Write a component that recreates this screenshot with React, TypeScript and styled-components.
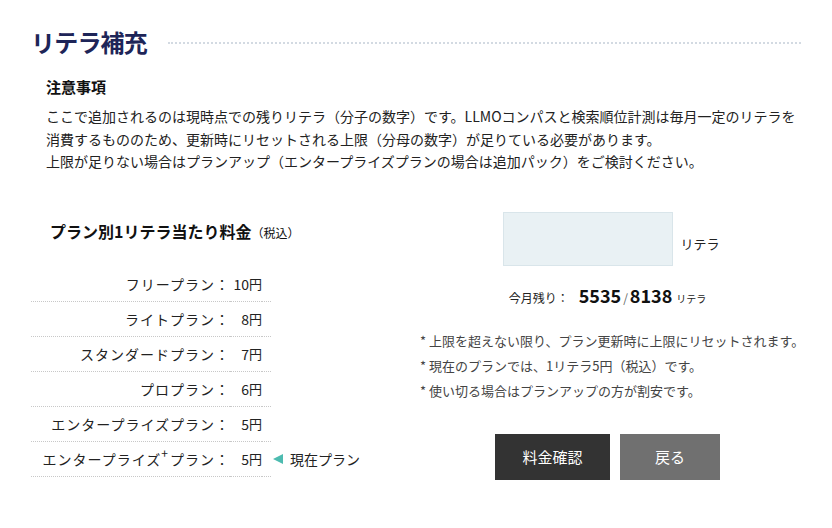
import styled, { createGlobalStyle } from 'styled-components'

const GlobalStyle = createGlobalStyle`
  body {
    margin: 0;
    background: #fff;
    font-family: 'Noto Sans CJK JP', 'Noto Sans', sans-serif;
    color: #222;
  }
`

const Page = styled.div`
  width: 832px;
  height: 528px;
  box-sizing: border-box;
  padding: 24px 31px 0 31px;
`

const Header = styled.div`
  display: flex;
  align-items: center;
  gap: 21px;
`

const Title = styled.h1`
  margin: 0;
  font-size: 24px;
  line-height: 36px;
  font-weight: 700;
  color: #1e2558;
  letter-spacing: -0.8px;
`

const HeaderLine = styled.div`
  flex: 1;
  border-top: 2px dotted #d3dae2;
  margin-top: 2px;
`

const Notice = styled.div`
  padding-left: 15px;
  margin-top: 16px;
`

const NoticeTitle = styled.h2`
  margin: 0 0 7px;
  font-size: 15px;
  line-height: 22px;
  font-weight: 700;
  color: #111;
`

const NoticeText = styled.p`
  margin: 0;
  font-size: 14px;
  line-height: 22.5px;
  white-space: nowrap;
  color: #222;
`

const Lower = styled.div`
  display: grid;
  grid-template-columns: 383px minmax(0, 1fr);
  margin-top: 39px;
`

const PriceColumn = styled.div`
  padding-top: 8px;
`

const PriceHeading = styled.h3`
  margin: 0 0 23px 19px;
  font-size: 16px;
  line-height: 22px;
  font-weight: 700;
  color: #111;
`

const Small = styled.span`
  font-size: 12px;
  font-weight: 400;
`

const PriceRow = styled.div`
  display: grid;
  grid-template-columns: 199px 32px 9px auto;
  height: 35px;
  align-items: stretch;
  font-size: 14px;
`

const Cell = styled.div<{ $spaced?: boolean }>`
  display: flex;
  align-items: center;
  justify-content: flex-end;
  border-bottom: 1px dotted #c8c8c8;
  white-space: nowrap;
  letter-spacing: ${(p) => (p.$spaced ? '1px' : '0')};
`

const Yen = styled.span`
  font-size: 13px;
`

const Plus = styled.span`
  font-size: 12px;
  position: relative;
  top: -6px;
  margin: 0 1px 0 0;
`

const Current = styled.div`
  display: flex;
  align-items: center;
  gap: 7px;
  padding-left: 2px;
  font-size: 14px;
  white-space: nowrap;
`

const Triangle = styled.span`
  width: 0;
  height: 0;
  border-top: 5px solid transparent;
  border-bottom: 5px solid transparent;
  border-right: 10px solid #4dbbb0;
`

const RightColumn = styled.div`
  display: flex;
  flex-direction: column;
  align-items: center;
`

const InputRow = styled.div`
  display: flex;
  align-items: center;
  gap: 7px;
  margin-left: 8px;
`

const CountInput = styled.input`
  width: 170px;
  height: 54px;
  box-sizing: border-box;
  background: #e9f1f4;
  border: 1px solid #d9e5ea;
  outline: none;
`

const Unit = styled.span`
  font-size: 13px;
  margin-top: 10px;
`

const Remaining = styled.div`
  display: flex;
  align-items: baseline;
  margin-top: 15px;
  line-height: 28px;
`

const RemainLabel = styled.span`
  font-size: 12px;
  margin-right: 10px;
`

const Big = styled.span`
  font-size: 18px;
  font-weight: 700;
  color: #111;
`

const Slash = styled.span`
  font-size: 12px;
  color: #666;
  margin: 0 2px;
`

const TinyUnit = styled.span`
  font-size: 10px;
  margin-left: 4px;
`

const Notes = styled.ul`
  align-self: stretch;
  list-style: none;
  margin: 15px 0 0;
  padding-left: 6px;
  font-size: 13px;
  line-height: 25px;
  color: #444;
  white-space: nowrap;
`

const Buttons = styled.div`
  display: flex;
  gap: 10px;
  margin-top: 31px;
`

const Button = styled.button<{ $variant: 'primary' | 'secondary' }>`
  height: 46px;
  width: ${(p) => (p.$variant === 'primary' ? '115px' : '100px')};
  border: none;
  background: ${(p) => (p.$variant === 'primary' ? '#333333' : '#707070')};
  color: #fff;
  font-family: inherit;
  font-size: 15px;
  cursor: pointer;
`

const plans = [
  { name: 'フリープラン', price: '10' },
  { name: 'ライトプラン', price: '8' },
  { name: 'スタンダードプラン', price: '7' },
  { name: 'プロプラン', price: '6' },
  { name: 'エンタープライズプラン', price: '5' },
]

const App = () => {
  return (
    <Page>
      <GlobalStyle />
      <Header>
        <Title>リテラ補充</Title>
        <HeaderLine />
      </Header>
      <Notice>
        <NoticeTitle>注意事項</NoticeTitle>
        <NoticeText>
          ここで追加されるのは現時点での残りリテラ（分子の数字）です。LLMOコンパスと検索順位計測は毎月一定のリテラを
        </NoticeText>
        <NoticeText>
          消費するもののため、更新時にリセットされる上限（分母の数字）が足りている必要があります。
        </NoticeText>
        <NoticeText>
          上限が足りない場合はプランアップ（エンタープライズプランの場合は追加パック）をご検討ください。
        </NoticeText>
      </Notice>
      <Lower>
        <PriceColumn>
          <PriceHeading>
            プラン別1リテラ当たり料金<Small>（税込）</Small>
          </PriceHeading>
          {plans.map((p) => (
            <PriceRow key={p.name}>
              <Cell $spaced>{p.name}：</Cell>
              <Cell>
                {p.price}
                <Yen>円</Yen>
              </Cell>
              <Cell />
              <div />
            </PriceRow>
          ))}
          <PriceRow>
            <Cell $spaced>
              エンタープライズ<Plus>+</Plus>プラン：
            </Cell>
            <Cell>
              5<Yen>円</Yen>
            </Cell>
            <Cell />
            <Current>
              <Triangle />
              現在プラン
            </Current>
          </PriceRow>
        </PriceColumn>
        <RightColumn>
          <InputRow>
            <CountInput type="text" />
            <Unit>リテラ</Unit>
          </InputRow>
          <Remaining>
            <RemainLabel>今月残り：</RemainLabel>
            <Big>5535</Big>
            <Slash>/</Slash>
            <Big>8138</Big>
            <TinyUnit>リテラ</TinyUnit>
          </Remaining>
          <Notes>
            <li>* 上限を超えない限り、プラン更新時に上限にリセットされます。</li>
            <li>* 現在のプランでは、1リテラ5円（税込）です。</li>
            <li>* 使い切る場合はプランアップの方が割安です。</li>
          </Notes>
          <Buttons>
            <Button $variant="primary">料金確認</Button>
            <Button $variant="secondary">戻る</Button>
          </Buttons>
        </RightColumn>
      </Lower>
    </Page>
  )
}

export default App
